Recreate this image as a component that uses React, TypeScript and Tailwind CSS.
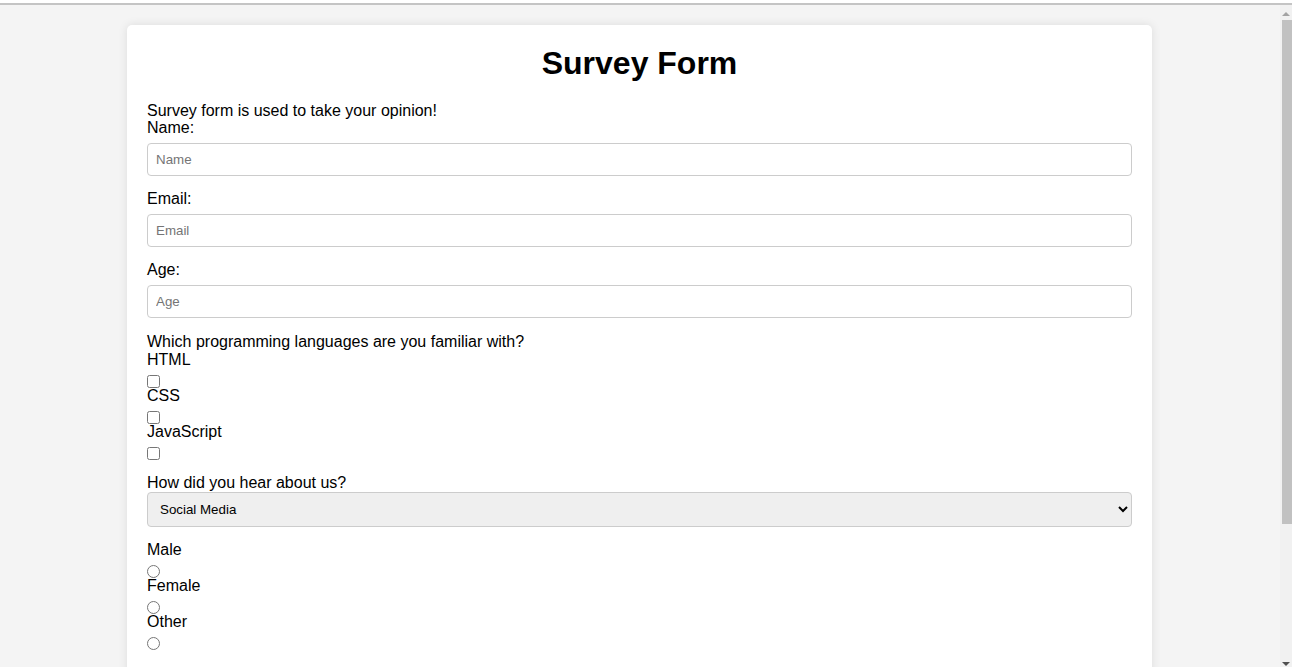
import { useState } from 'react';

const languages = ['HTML', 'CSS', 'JavaScript'];
const genders = ['Male', 'Female', 'Other'];

function TextField({ label, type = 'text' }: { label: string; type?: string }) {
  return (
    <div className="mb-[14px]">
      <label className="block leading-[18px]">{label}:</label>
      <input
        type={type}
        placeholder={label}
        className="mt-[6px] block h-[33px] w-full rounded-[4px] border border-[#ccc] bg-white px-[8px] text-[13.33px] leading-[15px] placeholder:text-[#757575] focus:outline-none"
      />
    </div>
  );
}

// window scrollbar as it shows in the screenshot
function ScrollBar() {
  return (
    <div className="fixed top-[5px] right-0 bottom-0 flex w-[12px] flex-col items-center bg-[#f1f1f1]">
      <div className="mt-[7px] h-0 w-0 border-x-[4px] border-b-[4px] border-x-transparent border-b-[#a3a3a3]" />
      <div className="mt-[4px] ml-[2px] h-[504px] w-[10px] bg-[#c1c1c1]" />
      <div className="mt-auto mb-[1px] h-0 w-0 border-x-[4px] border-t-[4px] border-x-transparent border-t-[#505050]" />
    </div>
  );
}

export default function App() {
  const [source, setSource] = useState('social');

  return (
    <div className="min-h-screen bg-[#f4f4f4] font-['Liberation_Sans',Arial,sans-serif] text-[16px] text-black">
      <div className="h-[3px] bg-white" />
      <div className="h-[2px] bg-[#c4c4c4]" />
      <ScrollBar />

      <div className="mr-[13px] pt-[20px] pb-[20px]">
        <div className="mx-auto w-[1025px] rounded-[5px] bg-white px-[20px] pt-[20px] pb-[40px] shadow-[0_0_10px_rgba(0,0,0,0.1)]">
          <h1 className="mb-[20px] text-center text-[32px] font-bold leading-[37px]">Survey Form</h1>
          <p className="leading-[17px]">Survey form is used to take your opinion!</p>

          <form onSubmit={(e) => e.preventDefault()}>
            <TextField label="Name" />
            <TextField label="Email" type="email" />
            <TextField label="Age" type="number" />

            <p className="pt-[1px] leading-[18px]">Which programming languages are you familiar with?</p>
            {languages.map((lang) => (
              <div key={lang}>
                <label className="block leading-[18px]">{lang}</label>
                <div className="h-[18px] pt-[6px]">
                  <input type="checkbox" className="m-0 block h-[13px] w-[13px]" />
                </div>
              </div>
            ))}

            <div className="mt-[15px] mb-[14px]">
              <label className="block leading-[18px]">How did you hear about us?</label>
              <select
                value={source}
                onChange={(e) => setSource(e.target.value)}
                className="block h-[35px] w-full rounded-[4px] border border-[#ccc] bg-[#efefef] px-[8px] text-[13.33px]"
              >
                <option value="social">Social Media</option>
                <option value="friend">Friend</option>
                <option value="search">Search Engine</option>
                <option value="other">Other</option>
              </select>
            </div>

            {genders.map((g) => (
              <div key={g}>
                <label className="block leading-[18px]">{g}</label>
                <div className="h-[18px] pt-[6px]">
                  <input type="radio" name="gender" className="m-0 block h-[13px] w-[13px]" />
                </div>
              </div>
            ))}
          </form>
        </div>
      </div>
    </div>
  );
}
